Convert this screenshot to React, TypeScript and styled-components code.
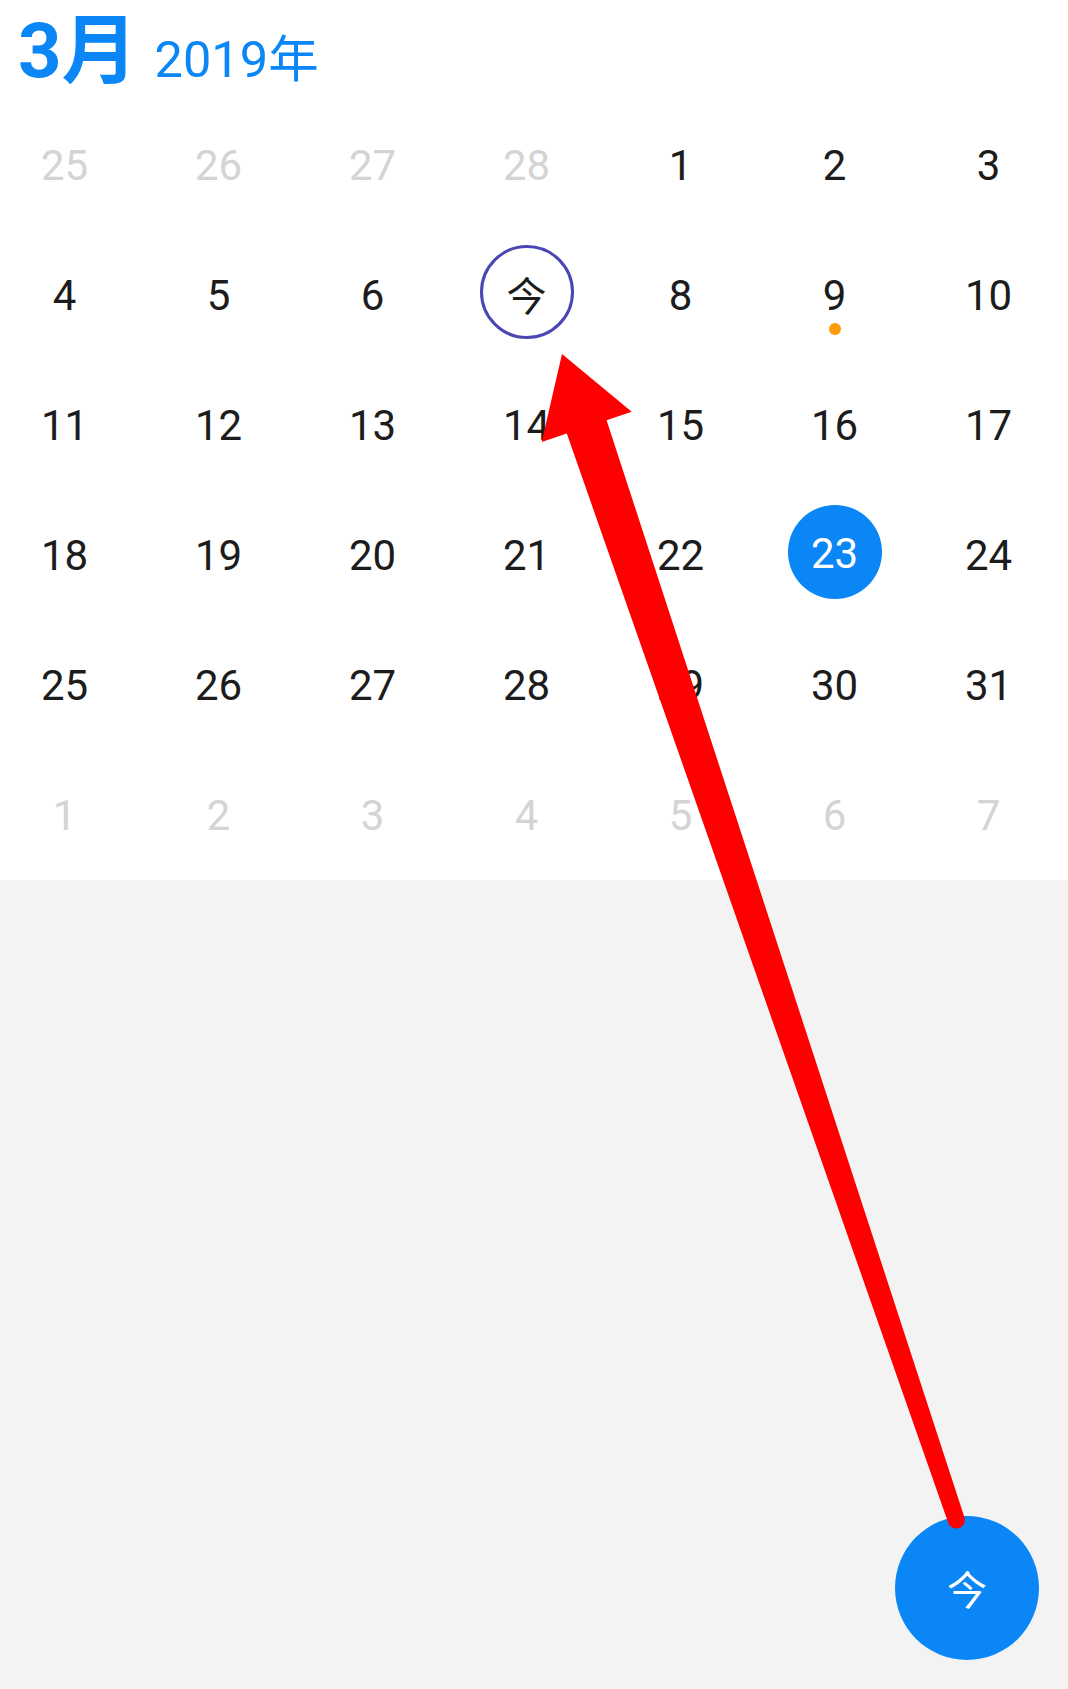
import React from "react";
import styled, { createGlobalStyle, css } from "styled-components";

const BLUE = "#0a86f6";

const Global = createGlobalStyle`
  html, body {
    margin: 0;
    padding: 0;
    background: #f3f3f3;
  }
  body {
    font-family: Roboto, "Noto Sans CJK SC", sans-serif;
    overflow: hidden;
  }
`;

const Page = styled.div`
  position: relative;
  width: 1068px;
  height: 1689px;
  background: #f3f3f3;
  overflow: hidden;
`;

const Sheet = styled.section`
  background: #ffffff;
  display: flex;
  flex-direction: column;
`;

const Header = styled.header`
  height: 100px;
  box-sizing: border-box;
  padding: 13px 0 0 18px;
  display: flex;
  align-items: baseline;
  color: ${BLUE};
  font-family: Roboto, "Noto Sans CJK SC", sans-serif;
`;

const Month = styled.span`
  font-size: 76px;
  font-weight: 700;
  line-height: 1;
`;

const Year = styled.span`
  font-size: 50.5px;
  font-weight: 400;
  line-height: 1;
  margin-left: 17px;
`;

const Grid = styled.div`
  display: grid;
  grid-template-columns: repeat(7, 154px);
  grid-auto-rows: 130px;
  margin-left: -12.5px;
`;

type Tone = "muted" | "normal";

const Cell = styled.div<{ $tone: Tone }>`
  position: relative;
  display: flex;
  align-items: center;
  justify-content: center;
  font-size: 42px;
  font-family: Roboto, "Noto Sans CJK SC", sans-serif;
  color: ${(p) => (p.$tone === "muted" ? "#d4d4d4" : "#1c1c1c")};
`;

type Mark = "today" | "selected";

const DayMark = styled.div<{ $mark: Mark }>`
  width: 94px;
  height: 94px;
  box-sizing: border-box;
  border-radius: 50%;
  display: flex;
  align-items: center;
  justify-content: center;
  margin-top: -6px;
  padding-top: 3px;
  ${(p) =>
    p.$mark === "today"
      ? css`
          border: 3px solid #4a46b4;
          color: #1c1c1c;
          font-size: 40px;
          font-family: "Noto Sans CJK SC", sans-serif;
        `
      : css`
          background: ${BLUE};
          color: #ffffff;
        `}
`;

const EventDot = styled.span`
  position: absolute;
  left: 50%;
  top: 93px;
  width: 12px;
  height: 12px;
  margin-left: -6px;
  border-radius: 50%;
  background: #ff9a0a;
`;

const Fab = styled.button`
  position: absolute;
  right: 29px;
  bottom: 29px;
  width: 144px;
  height: 144px;
  border: none;
  border-radius: 50%;
  background: ${BLUE};
  color: #ffffff;
  font-size: 40px;
  font-family: "Noto Sans CJK SC", sans-serif;
  display: flex;
  align-items: center;
  justify-content: center;
  padding: 0;
`;

const Annotation = styled.svg`
  position: absolute;
  left: 0;
  top: 0;
  width: 1068px;
  height: 1689px;
  pointer-events: none;
`;

type Day = {
  label: string;
  tone: Tone;
  mark?: Mark;
  dot?: boolean;
};

const m = (n: number): Day => ({ label: String(n), tone: "muted" });
const d = (n: number): Day => ({ label: String(n), tone: "normal" });

const days: Day[] = [
  m(25), m(26), m(27), m(28), d(1), d(2), d(3),
  d(4), d(5), d(6), { label: "今", tone: "normal", mark: "today" }, d(8), { ...d(9), dot: true }, d(10),
  d(11), d(12), d(13), d(14), d(15), d(16), d(17),
  d(18), d(19), d(20), d(21), d(22), { ...d(23), mark: "selected" }, d(24),
  d(25), d(26), d(27), d(28), d(29), d(30), d(31),
  m(1), m(2), m(3), m(4), m(5), m(6), m(7),
];

export default function App() {
  return (
    <Page>
      <Global />
      <Sheet>
        <Header>
          <Month>3月</Month>
          <Year>2019年</Year>
        </Header>
        <Grid>
          {days.map((day, i) => (
            <Cell key={i} $tone={day.tone}>
              {day.mark ? <DayMark $mark={day.mark}>{day.label}</DayMark> : day.label}
              {day.dot && <EventDot />}
            </Cell>
          ))}
        </Grid>
      </Sheet>
      <Fab>今</Fab>
      <Annotation viewBox="0 0 1068 1689">
        <path
          d="M562 354 L631.7 411.7 L606.6 420.2 L964.4 1517.3 A8.5 8.5 0 0 1 948.2 1522.7 L566.8 433.6 L541.7 442.1 Z"
          fill="#ff0000"
        />
      </Annotation>
    </Page>
  );
}
